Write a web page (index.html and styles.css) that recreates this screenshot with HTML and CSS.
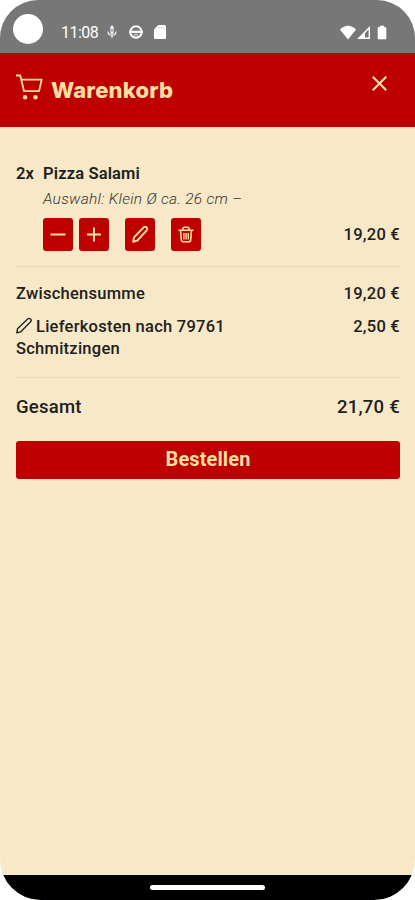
FILE: index.html
```html
<!DOCTYPE html>
<html lang="de">
<head>
<meta charset="utf-8">
<title>Warenkorb</title>
<link rel="stylesheet" href="styles.css">
</head>
<body>
<div class="phone">
  <div class="status">
    <span class="camera"></span>
    <span class="clock">11:08</span>
    <svg class="s-mic" width="10" height="14" viewBox="0 0 10 14" fill="none" stroke="#eee" stroke-width="1.300"><path d="M5 2.200v5.600" stroke-width="3.200" stroke-linecap="round"/><path d="M1 6.500c0 5 8 5 8 0M5 10v3"/><path d="M5 4v3" stroke="#999"/></svg>
    <svg class="s-face" width="14" height="14" viewBox="0 0 14 14" fill="none" stroke="#fff"><circle cx="7" cy="7" r="5.700" stroke-width="2"/><path d="M0 6.800h14" stroke-width="2.200"/><path d="M5 9.800h4" stroke-width="1"/></svg>
    <svg class="s-card" width="12" height="14" viewBox="0 0 12 14" fill="#fff"><path d="M4.200 0H10.500Q12 0 12 1.500V12.500Q12 14 10.500 14H1.500Q0 14 0 12.500V4.500Z"/><path d="M5 1.800v2.200M7.300 1.800v2.200M9.600 1.800v2.200" stroke="#ccc" stroke-width=".7"/></svg>
    <span class="grow"></span>
    <svg class="s-right" width="48" height="15" viewBox="0 0 48 15"><path d="M0 4.500Q8 -3 16 4.500L8 14.500Z" fill="#fff"/><path d="M18.800 13.300L29.300 2.800V13.300Z" fill="none" stroke="#fff" stroke-width="1.400"/><path d="M18 14L25 7V14Z" fill="#fff"/><path d="M38 2.500h2V1h4v1.500h2V14h-8Z" fill="#fff" stroke="#fff" stroke-width=".6" stroke-linejoin="round"/></svg>
  </div>
  <header class="head">
    <svg class="cart" width="27" height="26" viewBox="0 0 27 26" fill="none" stroke="#ffdf9f" stroke-width="1.800" stroke-linejoin="round"><path d="M0 1.500H4.300L8 17.200H23L25.700 5.600H5.500"/><circle cx="9.100" cy="23.200" r="2.200" fill="#ffdf9f" stroke="none"/><circle cx="19.500" cy="23.200" r="2.200" fill="#ffdf9f" stroke="none"/></svg>
    <h1>Warenkorb</h1>
    <span class="grow"></span>
    <svg class="close" width="15" height="15" viewBox="0 0 15 15" stroke="#ffe4b4" stroke-width="2"><path d="M.8.8l13.400 13.400M14.200.8L.8 14.200"/></svg>
  </header>
  <main class="body">
    <section class="item">
      <div class="row"><span class="qty">2x</span><span class="name">Pizza Salami</span></div>
      <div class="choice">Auswahl: Klein Ø ca. 26 cm –</div>
      <div class="actions">
        <span class="btn"><svg width="30" height="32" viewBox="0 0 30 32" stroke="#ffdf9f" stroke-width="2"><path d="M7.500 16.500h15"/></svg></span>
        <span class="btn plus"><svg width="30" height="32" viewBox="0 0 30 32" stroke="#ffdf9f" stroke-width="2"><path d="M8 16.500h14M15 9.500v14"/></svg></span>
        <span class="btn edit"><svg width="30" height="32" viewBox="0 0 30 32" fill="none" stroke="#ffdf9f" stroke-width="1.900" stroke-linejoin="round"><path d="M8.200 23.800l.8-4.500L18.700 9.300q1.700-1.300 3 0q1.200 1.400 0 3L12.400 22.500Z"/></svg></span>
        <span class="btn bin"><svg width="30" height="32" viewBox="0 0 30 32" fill="none" stroke="#ffdf9f" stroke-width="1.600" stroke-linejoin="round"><path d="M7.500 12.300h15M9.500 12.300l.8 9.500q.2 2 2 2h5.400q1.800 0 2-2l.8-9.500M11.500 12.300q.2-3 2-3h3q1.800 0 2 3"/><path stroke-width="1.400" d="M12.900 15v6.500M15.100 15v6.500M17.300 15v6.500"/></svg></span>
        <span class="grow"></span>
        <span class="price">19,20 €</span>
      </div>
    </section>
    <section class="sums">
      <div class="row"><span class="subtotal">Zwischensumme</span><span class="grow"></span><span class="price">19,20 €</span></div>
      <div class="row delivery"><span class="label"><svg class="pen" width="16" height="17" viewBox="0 0 16 17" fill="none" stroke="#252525" stroke-width="1.400" stroke-linejoin="round"><path d="M.8 15.800l.7-4L11.700 1.900q1.600-1.100 2.900.1q1.200 1.400 0 2.700L4.600 14.900Z"/></svg><span class="fee">Lieferkosten nach 79761</span><br><span class="town">Schmitzingen</span></span><span class="grow"></span><span class="price">2,50 €</span></div>
    </section>
    <div class="row total"><span>Gesamt</span><span class="grow"></span><span class="sum">21,70 €</span></div>
    <div class="order"><span>Bestellen</span></div>
  </main>
  <div class="nav"><span class="handle"></span></div>
</div>
</body>
</html>
```
FILE: styles.css
```css
* { box-sizing: border-box; }
body { margin: 0; background: #fff; font-family: Roboto, "Liberation Sans", sans-serif; color: #202020; }
.phone { width: 415px; height: 900px; display: flex; flex-direction: column; background: #f7e8c7; border-radius: 38px 38px 41px 41px; overflow: hidden; }
.grow { flex: 1; }
.row { display: flex; align-items: flex-start; }
.status { height: 53px; flex: none; background: #777; display: flex; align-items: flex-start; padding: 25px 27px 0 13px; color: #fff; }
.camera { width: 30px; height: 30px; border-radius: 50%; background: #fff; margin-top: -11px; }
.clock { font-size: 16px; line-height: 16px; margin-left: 18px; width: 38px; white-space: nowrap; letter-spacing: -.5px; }
.s-mic { margin-left: 8px; }
.s-face { margin-left: 12px; }
.s-card { margin-left: 11px; }
.head { height: 74px; flex: none; background: #bd0000; display: flex; align-items: flex-start; padding: 0 28px 0 16px; }
.cart { margin-top: 21px; }
h1 { margin: 23px 0 0 8px; font-family: Inter, sans-serif; font-weight: 800; font-size: 22px; line-height: 28px; color: #ffdf9f; letter-spacing: .2px; }
.close { margin-top: 23px; }
.body { flex: 1; padding: 36px 15px 0 16px; font-size: 16.5px; line-height: 22px; font-weight: 500; letter-spacing: .25px; }
.item { height: 104px; border-bottom: 1px solid #e9dab7; }
.qty { width: 27px; font-weight: 600; letter-spacing: 0; }
.name { font-weight: 600; letter-spacing: .15px; }
.choice { margin: 4px 0 0 27px; line-height: 20px; font-size: 15.5px; font-weight: 300; font-style: italic; letter-spacing: .28px; color: #353535; }
.actions { display: flex; align-items: center; margin: 9px 0 0 27px; }
.btn { width: 30px; height: 33px; border-radius: 3px; background: #bd0000; display: flex; }
.plus { margin-left: 6px; }
.edit, .bin { margin-left: 16px; }
.price { letter-spacing: .25px; }
.sums { height: 111px; padding-top: 16px; border-bottom: 1px solid #e9dab7; }
.delivery { margin-top: 11px; }
.pen { margin-right: 4px; vertical-align: -2px; }
.total { margin-top: 18px; font-size: 18.5px; }
.order { margin-top: 23px; height: 38px; border-radius: 3px; background: #bd0000; color: #ffdf9f; font-weight: 700; font-size: 20px; line-height: 37px; text-align: center; letter-spacing: .1px; }
.nav { height: 25px; flex: none; background: #000; display: flex; justify-content: center; }
.handle { width: 115px; height: 5px; border-radius: 3px; background: #fff; margin-top: 10px; }
```
